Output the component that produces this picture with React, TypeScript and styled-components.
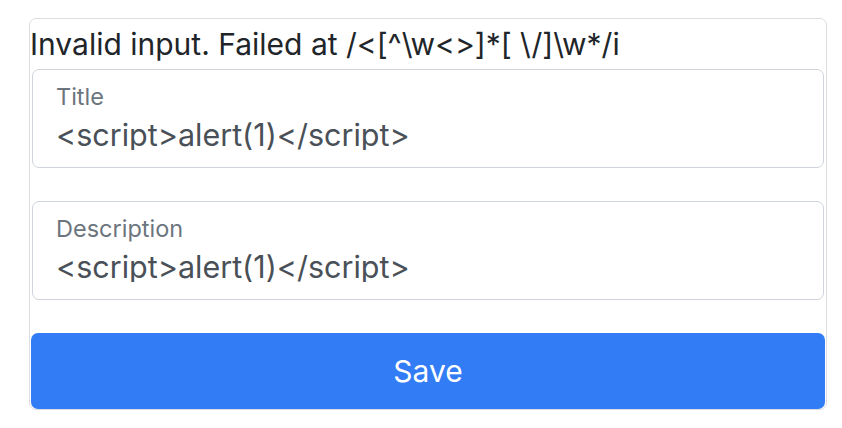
import styled, { createGlobalStyle } from 'styled-components';

const GlobalStyle = createGlobalStyle`
  html, body {
    margin: 0;
    padding: 0;
    background: #ffffff;
  }
  body {
    font-family: Inter, 'Liberation Sans', Arial, sans-serif;
  }
`;

/**
 * Edit form that shows the validation error on top.
 */
const App = () => {
  return (
    <>
      <GlobalStyle />
      <Card>
        <ErrorText>Invalid input. Failed at /&lt;[^\w&lt;&gt;]*[ \/]\w*/i</ErrorText>
        <Form onSubmit={(e) => e.preventDefault()}>
          <Field>
            <FieldLabel>Title</FieldLabel>
            <FieldInput readOnly value="<script>alert(1)</script>" />
          </Field>
          <Field>
            <FieldLabel>Description</FieldLabel>
            <FieldInput readOnly value="<script>alert(1)</script>" />
          </Field>
          <SaveButton type="submit">Save</SaveButton>
        </Form>
      </Card>
    </>
  );
};

const Card = styled.div`
  box-sizing: border-box;
  margin: 18px 0 0 29px;
  width: 798px;
  border: 1px solid #dcdddf;
  border-radius: 7px;
  padding: 0 1px 0 1px;
`;

const ErrorText = styled.div`
  height: 50px;
  margin-left: -1px;
  font-size: 30px;
  line-height: 50px;
  color: #212529;
  white-space: nowrap;
`;

const Form = styled.form`
  display: flex;
  flex-direction: column;
  gap: 33px;
  margin: 0;
`;

const Field = styled.label`
  box-sizing: border-box;
  display: flex;
  flex-direction: column;
  height: 99px;
  margin: 0 1px;
  padding: 15px 23px 0 23px;
  border: 1px solid #ced4da;
  border-radius: 7px;
  background: #ffffff;
`;

const FieldLabel = styled.span`
  font-size: 23.5px;
  line-height: 23px;
  color: #6c757d;
`;

const FieldInput = styled.input`
  margin-top: 11px;
  padding: 0;
  border: none;
  outline: none;
  background: transparent;
  font-family: Inter, 'Liberation Sans', Arial, sans-serif;
  font-size: 30.5px;
  line-height: 31px;
  height: 31px;
  color: #495057;
`;

const SaveButton = styled.button`
  height: 76px;
  border: none;
  border-radius: 7px;
  background: #327cf5;
  color: #ffffff;
  font-family: Inter, 'Liberation Sans', Arial, sans-serif;
  font-size: 30px;
  cursor: pointer;
`;

export default App;
